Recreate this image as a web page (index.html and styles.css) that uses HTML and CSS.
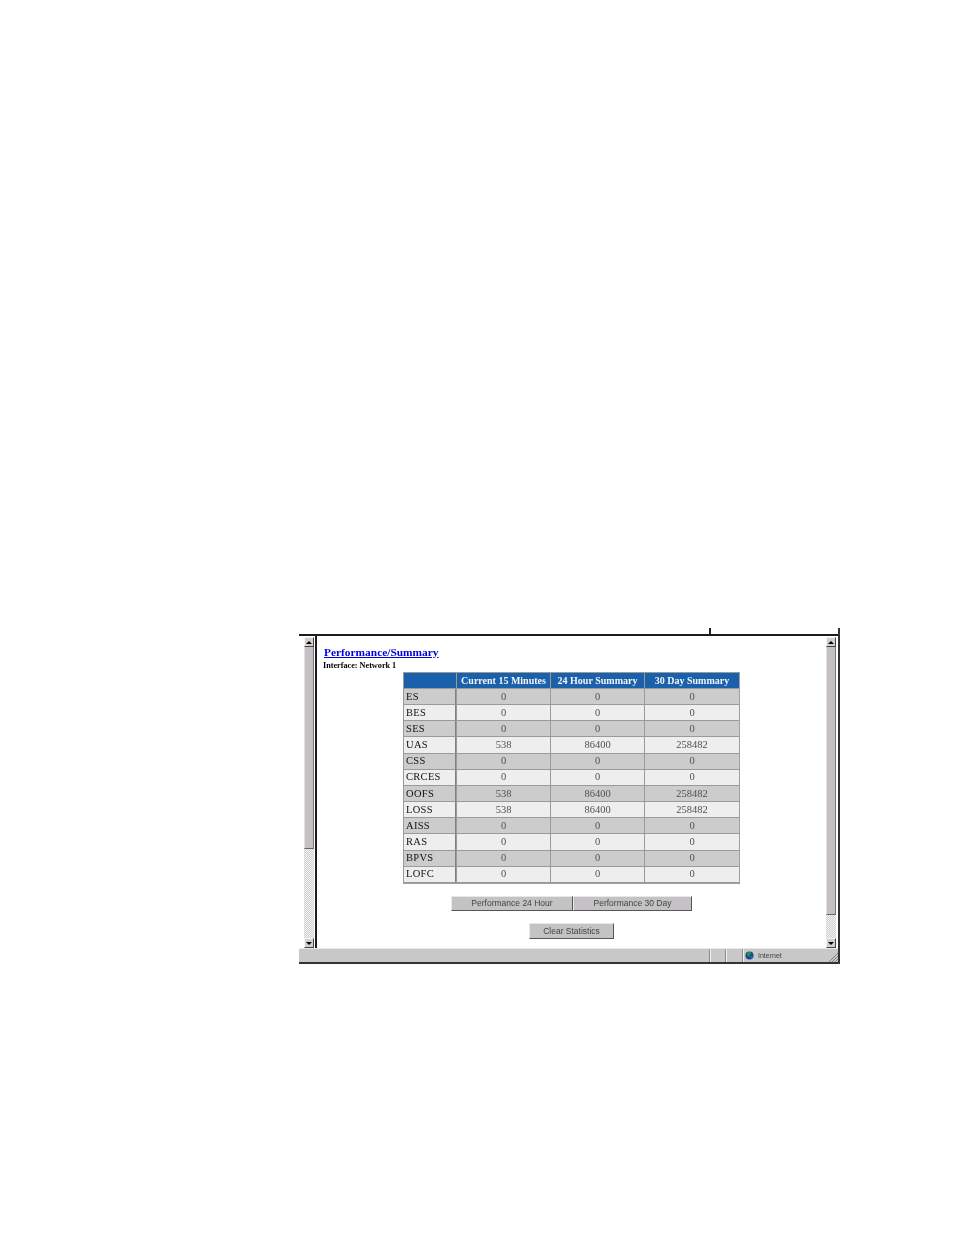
FILE: index.html
```html
<!DOCTYPE html>
<html lang="en">
<head>
    <meta charset="UTF-8">
    <meta name="viewport" content="width=device-width, initial-scale=1.0">
    <title>Performance/Summary</title>
    <link rel="stylesheet" href="styles.css">
</head>
<body>
    <div class="window">
        <div class="tick-bar"><span class="tick"></span></div>

        <div class="viewport">
            <div class="scrollbar scrollbar-left">
                <div class="scroll-btn"><span class="arrow-up"></span></div>
                <div class="scroll-thumb thumb-left"></div>
                <div class="scroll-track"></div>
                <div class="scroll-btn"><span class="arrow-down"></span></div>
            </div>

            <div class="content">
                <h1><a href="#">Performance/Summary</a></h1>
                <p class="interface">Interface: Network 1</p>

                <table class="stats">
                    <colgroup>
                        <col class="col-name">
                        <col class="col-first">
                        <col class="col-second">
                        <col class="col-third">
                    </colgroup>
                    <thead>
                        <tr>
                            <th></th>
                            <th>Current 15 Minutes</th>
                            <th>24 Hour Summary</th>
                            <th>30 Day Summary</th>
                        </tr>
                    </thead>
                    <tbody>
                        <tr><td>ES</td><td>0</td><td>0</td><td>0</td></tr>
                        <tr><td>BES</td><td>0</td><td>0</td><td>0</td></tr>
                        <tr><td>SES</td><td>0</td><td>0</td><td>0</td></tr>
                        <tr><td>UAS</td><td>538</td><td>86400</td><td>258482</td></tr>
                        <tr><td>CSS</td><td>0</td><td>0</td><td>0</td></tr>
                        <tr><td>CRCES</td><td>0</td><td>0</td><td>0</td></tr>
                        <tr><td>OOFS</td><td>538</td><td>86400</td><td>258482</td></tr>
                        <tr><td>LOSS</td><td>538</td><td>86400</td><td>258482</td></tr>
                        <tr><td>AISS</td><td>0</td><td>0</td><td>0</td></tr>
                        <tr><td>RAS</td><td>0</td><td>0</td><td>0</td></tr>
                        <tr><td>BPVS</td><td>0</td><td>0</td><td>0</td></tr>
                        <tr><td>LOFC</td><td>0</td><td>0</td><td>0</td></tr>
                    </tbody>
                </table>

                <div class="button-row">
                    <button class="btn btn-day" type="button">Performance 24 Hour</button>
                    <button class="btn btn-month" type="button">Performance 30 Day</button>
                </div>
                <div class="button-row clear-row">
                    <button class="btn btn-clear" type="button">Clear Statistics</button>
                </div>
            </div>

            <div class="scrollbar scrollbar-right">
                <div class="scroll-btn"><span class="arrow-up"></span></div>
                <div class="scroll-thumb thumb-right"></div>
                <div class="scroll-track"></div>
                <div class="scroll-btn"><span class="arrow-down"></span></div>
            </div>
        </div>

        <div class="statusbar">
            <div class="status-main"></div>
            <div class="status-cell"></div>
            <div class="status-cell"></div>
            <div class="status-zone">
                <svg class="globe" viewBox="0 0 10 10" xmlns="http://www.w3.org/2000/svg">
                    <circle cx="5" cy="5" r="4.5" fill="#1a3fa8"></circle>
                    <path d="M3 1.5 L6.5 1 L7 3 L5 4.5 L5.5 6 L3.5 6.5 L2 4 Z" fill="#1f9a3a"></path>
                    <path d="M6.5 6 L8.5 5 L8 7.5 L6.5 8.5 Z" fill="#1f9a3a"></path>
                </svg>
                <span>Internet</span>
            </div>
            <svg class="grip" viewBox="0 0 10 10" xmlns="http://www.w3.org/2000/svg">
                <path d="M10 1 L1 10 M10 4 L4 10 M10 7 L7 10" stroke="#808080" stroke-width="1" fill="none"></path>
            </svg>
        </div>
    </div>
</body>
</html>
```

FILE: styles.css
```css
/* Page is a white sheet with the browser capture sitting low on it */
body {
    margin: 0;
    background-color: #ffffff;
    padding: 628px 0 0 299px;
}

/* Browser capture */
.window {
    width: 539px;
    border-right: 2px solid #333333;
    filter: blur(0.4px);
}

.tick-bar {
    height: 6px;
    padding-left: 410px;
}
.tick {
    display: block;
    width: 2px;
    height: 6px;
    background-color: #222222;
}

.viewport {
    display: flex;
    height: 312px;
    border-top: 2px solid #1c1c1c;
    padding: 0 2px 0 5px;
}

/* Scrollbars */
.scrollbar {
    display: flex;
    flex-direction: column;
    width: 10px;
    padding-top: 1px;
}
.scrollbar-left {
    margin-right: 1px;
}
.scroll-btn {
    display: flex;
    align-items: center;
    justify-content: center;
    height: 10px;
    flex: none;
    background-color: #d4d0c8;
    border: 1px solid;
    border-color: #f4f4f4 #444444 #444444 #f4f4f4;
    box-sizing: border-box;
}
.arrow-up,
.arrow-down {
    width: 0;
    height: 0;
    border-left: 3px solid transparent;
    border-right: 3px solid transparent;
}
.arrow-up {
    border-bottom: 3px solid #000000;
}
.arrow-down {
    border-top: 3px solid #000000;
}
.scroll-thumb {
    flex: none;
    background-color: #c4c0c4;
    border-left: 1px solid #e0e0e0;
    border-right: 1px solid #777777;
    border-bottom: 1px solid #666666;
    box-sizing: border-box;
}
.thumb-left {
    height: 202px;
}
.thumb-right {
    height: 268px;
}
.scroll-track {
    flex: 1;
    background-color: #e4e4e4;
    background-image: repeating-conic-gradient(#f2f2f2 0 25%, #cfcfcf 0 50%);
    background-size: 2px 2px;
}

/* Page inside the browser */
.content {
    flex: 1;
    border-left: 2px solid #1c1c1c;
    padding-top: 10px;
    font-family: "Liberation Serif", serif;
    color: #000000;
}
h1 {
    margin: 0 0 0 7px;
    font-size: 11.4px;
    line-height: 13px;
    font-weight: 700;
}
h1 a {
    color: #0000e0;
}
.interface {
    margin: 0 0 0 6px;
    font-size: 8.2px;
    line-height: 13px;
    font-weight: 700;
}

/* Stats table */
.stats {
    margin: 0 auto;
    table-layout: fixed;
    width: 337px;
    border-collapse: separate;
    border-spacing: 0;
    border-right: 1px solid #a0a0a0;
    border-bottom: 1px solid #a0a0a0;
    font-size: 10.5px;
}
.col-name {
    width: 53px;
}
.col-first,
.col-second {
    width: 94px;
}
.col-third {
    width: 95px;
}
.stats th {
    height: 15px;
    padding: 0;
    background-color: #1a60ab;
    color: #f4f4f4;
    font-size: 10px;
    font-weight: 700;
    border-top: 1px solid #9a9a9a;
    border-left: 1px solid #9a9a9a;
    border-bottom: 1px solid #9a9a9a;
}
.stats td {
    height: 15.17px;
    padding: 0;
    line-height: 12px;
    text-align: center;
    color: #505050;
    border-left: 1px solid #9a9a9a;
    border-bottom: 1px solid #9a9a9a;
}
.stats td:first-child {
    padding-left: 2px;
    text-align: left;
    color: #111111;
    letter-spacing: 0.3px;
    border-right: 1px solid #808080;
}
.stats tbody tr:nth-child(odd) td {
    background-color: #cccccc;
}
.stats tbody tr:nth-child(even) td {
    background-color: #eeeeee;
}

/* Form buttons */
.button-row {
    display: flex;
    justify-content: center;
    margin-top: 12px;
}
.clear-row {
    margin-top: 12px;
}
.btn {
    height: 15px;
    padding: 0;
    font-family: "Liberation Sans", sans-serif;
    font-size: 8.5px;
    line-height: 12px;
    color: #444444;
    background-color: #c4c2c4;
    border: 1px solid;
    border-color: #e8e8e8 #555555 #555555 #e8e8e8;
}
.btn-day {
    width: 122px;
}
.btn-month {
    width: 119px;
}
.btn-clear {
    width: 85px;
    height: 16px;
}

/* Status bar */
.statusbar {
    display: flex;
    height: 13px;
    border-top: 1px solid #e8e8e8;
    border-bottom: 2px solid #333333;
    background-color: #c8c8c8;
    font-family: "Liberation Sans", sans-serif;
    font-size: 7px;
    color: #444444;
}
.status-main {
    width: 410px;
}
.status-cell {
    width: 15px;
    border-left: 1px solid #8c8c8c;
    box-shadow: inset 1px 0 0 #f0f0f0;
}
.status-cell + .status-cell {
    width: 16px;
}
.status-zone {
    display: flex;
    align-items: center;
    gap: 4px;
    flex: 1;
    padding-left: 2px;
    border-left: 1px solid #8c8c8c;
    box-shadow: inset 1px 0 0 #f0f0f0;
}
.globe {
    width: 9px;
    height: 9px;
}
.grip {
    width: 10px;
    height: 10px;
    align-self: flex-end;
}
```
